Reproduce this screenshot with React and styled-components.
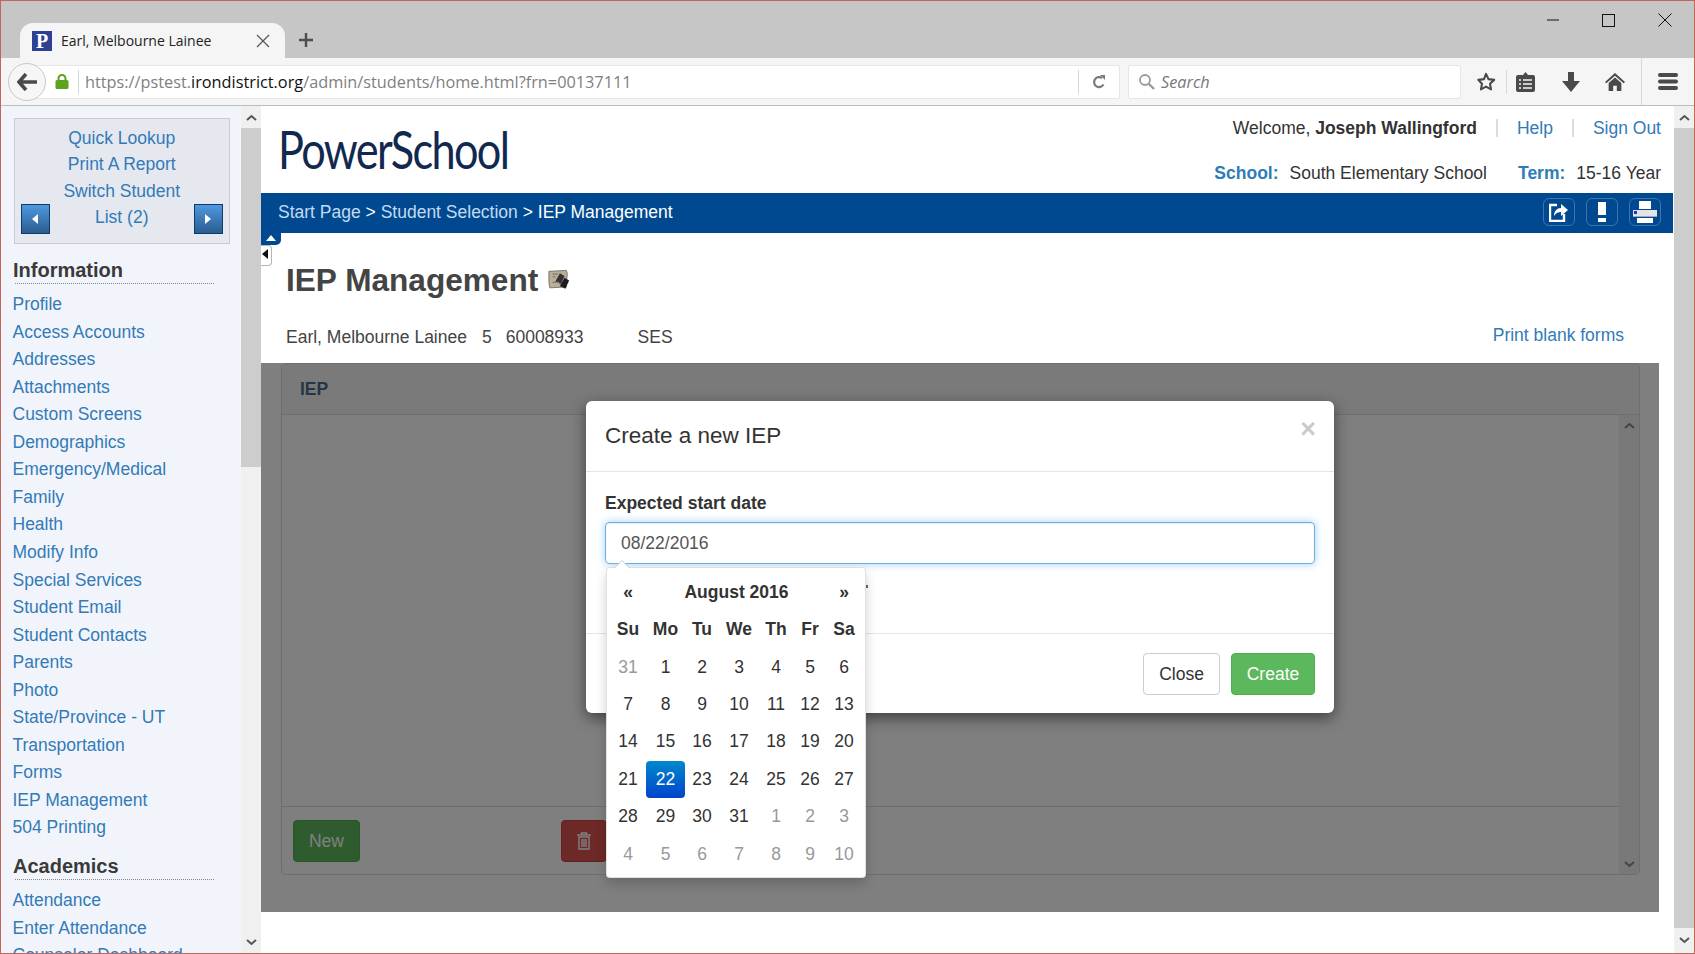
import React from 'react'
import styled, { createGlobalStyle } from 'styled-components'

const GlobalStyle = createGlobalStyle`
  html, body {
    margin: 0;
    padding: 0;
    background: #fff;
  }
  * { box-sizing: border-box; }
`;

const Window = styled.div`
  width: 1695px;
  height: 954px;
  border: 1px solid #c2675c;
  display: flex;
  flex-direction: column;
  overflow: hidden;
  font-family: "Liberation Sans", Arial, sans-serif;
  font-size: 17.5px;
  color: #333;
  background: #fff;
`;

const TitleBar = styled.div`
  height: 57px;
  flex: none;
  background: #c6c6c6;
  display: flex;
  align-items: flex-end;
  padding-left: 19px;
`;

const Tab = styled.div`
  width: 265px;
  height: 35px;
  background: #f5f5f5;
  border-radius: 13px 13px 0 0;
  display: flex;
  align-items: center;
  padding: 0 15px 0 12px;
  font-family: "Open Sans", sans-serif;
  font-size: 14px;
  color: #222;
`;

const Favicon = styled.div`
  width: 20px;
  height: 20px;
  background: #2f3f92;
  color: #fff;
  font-family: "Liberation Serif", serif;
  font-weight: bold;
  font-size: 20px;
  line-height: 20px;
  text-align: center;
  margin-right: 9px;
`;

const TabLabel = styled.span`
  flex: 1;
`;

const NewTab = styled.div`
  margin: 0 0 10px 13px;
  display: flex;
`;

const WindowControls = styled.div`
  margin-left: auto;
  align-self: flex-start;
  display: flex;
  align-items: center;
  padding: 12px 22px 0 0;
  gap: 43px;
`;

const Toolbar = styled.div`
  height: 48px;
  flex: none;
  background: #f5f5f5;
  border-bottom: 1px solid #bdbdbd;
  display: flex;
  align-items: center;
  padding-left: 7px;
`;

const BackButton = styled.div`
  width: 38px;
  height: 38px;
  flex: none;
  border-radius: 50%;
  border: 1px solid #c9c9c9;
  background: #f6f6f6;
  display: flex;
  align-items: center;
  justify-content: center;
  margin-right: -26px;
  position: relative;
  z-index: 1;
`;

const UrlBar = styled.div`
  width: 1100px;
  height: 34px;
  background: #fff;
  border: 1px solid #e6e6e6;
  border-radius: 2px;
  display: flex;
  align-items: center;
  padding-left: 34px;
  font-family: "Open Sans", sans-serif;
  font-size: 16.3px;
  color: #7f7f7f;
`;

const VRule = styled.span`
  width: 1px;
  height: 24px;
  background: #d8d8d8;
  flex: none;
  margin: ${(p) => p.$margin || '0'};
`;

const UrlText = styled.span`
  flex: 1;
  white-space: nowrap;
  b {
    font-weight: 400;
    color: #111;
  }
`;

const SearchBar = styled.div`
  width: 333px;
  height: 34px;
  flex: none;
  margin-left: 8px;
  background: #fff;
  border: 1px solid #e6e6e6;
  border-radius: 2px;
  display: flex;
  align-items: center;
  padding-left: 9px;
  gap: 5px;
  font-family: "Open Sans", sans-serif;
  font-style: italic;
  font-size: 16.3px;
  color: #777;
`;

const IconSlot = styled.div`
  width: 20px;
  height: 22px;
  flex: none;
  display: flex;
  align-items: center;
  justify-content: center;
  margin-left: ${(p) => p.$ml || 0}px;
`;

const ToolRule = styled.span`
  width: 1px;
  flex: none;
  height: ${(p) => p.$h}px;
  background: #d9d9d9;
  margin-left: ${(p) => p.$ml}px;
`;

const Body = styled.div`
  flex: 1;
  display: flex;
  min-height: 0;
`;

const Sidebar = styled.nav`
  width: 240px;
  flex: none;
  background: #f1f5fb;
  padding: 12px 0 0 11.5px;
  overflow: hidden;
`;

const QuickBox = styled.div`
  width: 216px;
  margin: 0 0 0 1.5px;
  background: #e5e9ef;
  border: 1px solid #c9cbcc;
  padding: 6px 6px 9px 5.5px;
  text-align: center;
  line-height: 26.4px;
`;

const Link = styled.a`
  color: #337ab7;
  text-decoration: none;
  display: ${(p) => (p.$block ? 'block' : 'inline')};
`;

const SwitchRow = styled.div`
  height: 30px;
  display: flex;
  align-items: center;
  justify-content: space-between;
`;

const SwitchLabel = styled.span`
  padding-bottom: 4px;
`;

const ArrowButton = styled.div`
  width: 29px;
  height: 30px;
  background: linear-gradient(#4f98e0, #2a5c8f);
  border: 1px solid #0d3b70;
  display: flex;
  align-items: center;
  justify-content: center;
`;

const SideHeading = styled.h3`
  margin: ${(p) => p.$top}px 0 7px 2px;
  width: 199px;
  font-size: 20px;
  line-height: 24px;
  padding-bottom: 1px;
  font-weight: bold;
  text-indent: -1.5px;
  color: #3a3a3a;
  border-bottom: 1px dotted #888;
`;

const SideLink = styled(Link)`
  display: block;
  line-height: 27.53px;
  white-space: nowrap;
`;

const ScrollTrack = styled.div`
  width: ${(p) => p.$w}px;
  flex: none;
  background: #f0f0f0;
  display: flex;
  flex-direction: column;
`;

const ScrollEnd = styled.div`
  height: ${(p) => p.$h}px;
  flex: none;
  display: flex;
  align-items: center;
  justify-content: center;
`;

const ScrollThumb = styled.div`
  height: ${(p) => (p.$h ? `${p.$h}px` : 'auto')};
  flex: ${(p) => (p.$h ? 'none' : '1')};
  background: #cdcdcd;
`;

const ScrollRest = styled.div`
  flex: 1;
`;

const Main = styled.main`
  flex: 1;
  min-width: 0;
  position: relative;
  display: flex;
  flex-direction: column;
`;

const Header = styled.header`
  height: 87px;
  flex: none;
  display: flex;
  justify-content: space-between;
  padding: 9px 13px 0 16.5px;
`;

const Logo = styled.div`
  font-family: Lato, sans-serif;
  font-size: 52px;
  line-height: 62px;
  margin-top: 3px;
  letter-spacing: -2px;
  color: #12294f;
  transform: scaleX(0.832);
  transform-origin: left center;
`;

const HeaderInfo = styled.div`
  display: flex;
  flex-direction: column;
  align-items: flex-end;
  gap: 19px;
  line-height: 26px;
`;

const InfoRow = styled.div`
  display: flex;
  align-items: center;
  gap: ${(p) => p.$gap}px;
  white-space: nowrap;
`;

const Pipe = styled.span`
  width: 2px;
  height: 18px;
  background: #dcdcdc;
`;

const InfoKey = styled.b`
  color: #2e7db5;
  margin-left: ${(p) => p.$ml || 0}px;
`;

const CrumbBar = styled.div`
  height: 40px;
  flex: none;
  margin-right: 1px;
  background: #004990;
  display: flex;
  align-items: center;
  justify-content: space-between;
  padding: 0 12px 2px 17px;
  color: #fff;
`;

const CrumbLink = styled.a`
  color: #c3daf0;
  text-decoration: none;
`;

const CrumbTools = styled.div`
  display: flex;
  gap: 11px;
`;

const CrumbTool = styled.div`
  width: 32px;
  height: 28px;
  border: 1px solid #3d74ac;
  border-radius: 6px;
  display: flex;
  align-items: center;
  justify-content: center;
`;

const CollapseUp = styled.div`
  position: absolute;
  left: 0;
  top: 127px;
  width: 20px;
  height: 12px;
  background: #004990;
  border-radius: 0 0 5px 0;
  display: flex;
  justify-content: center;
  padding-top: 2px;
`;

const CollapseLeft = styled.div`
  position: absolute;
  left: 0;
  top: 139px;
  width: 11px;
  height: 21px;
  background: #fff;
  border: 1px solid #b5b5b5;
  border-left: 0;
  border-radius: 0 4px 4px 0;
  display: flex;
  align-items: center;
  padding-bottom: 3px;
`;

const PageTitle = styled.h1`
  margin: 27px 0 0;
  padding-left: 25px;
  font-size: 31.6px;
  line-height: 40px;
  font-weight: bold;
  color: #444;
  display: flex;
  align-items: center;
  gap: 10px;
`;

const StudentLine = styled.div`
  margin: 24px 0 13px;
  padding: 0 50px 0 25px;
  height: 26px;
  line-height: 26px;
  display: flex;
  color: #444;
`;

const StudentField = styled.span`
  margin-right: ${(p) => p.$mr}px;
`;

const PrintLink = styled(Link)`
  margin-left: auto;
  margin-top: -2px;
`;

const Content = styled.div`
  width: 1398px;
  height: 549px;
  flex: none;
  position: relative;
  padding: 0 19px 0 20px;
`;

const Panel = styled.section`
  height: 512px;
  border: 1px solid #ddd;
  border-radius: 4px;
  display: flex;
  flex-direction: column;
`;

const PanelHead = styled.div`
  height: 51px;
  flex: none;
  background: #f5f5f5;
  border-bottom: 1px solid #ddd;
  padding-left: 18px;
  line-height: 51px;
  font-weight: bold;
  color: #4a6d88;
`;

const PanelBody = styled.div`
  flex: 1;
  display: flex;
  min-height: 0;
`;

const PanelMain = styled.div`
  flex: 1;
  display: flex;
  flex-direction: column;
`;

const PanelBlank = styled.div`
  flex: 1;
`;

const PanelFoot = styled.div`
  height: 68px;
  flex: none;
  border-top: 1px solid #ddd;
  padding: 13px 11px;
  display: flex;
  gap: 201px;
`;

const Button = styled.button`
  height: 42px;
  font: inherit;
  border-radius: 4px;
  display: flex;
  align-items: center;
  justify-content: center;
  border: 1px solid ${(p) => p.$border};
  background: ${(p) => p.$bg};
  color: ${(p) => p.$color};
  width: ${(p) => p.$w}px;
  padding: 0;
`;

const Backdrop = styled.div`
  position: absolute;
  inset: 0;
  background: rgba(0, 0, 0, 0.5);
`;

const Modal = styled.div`
  position: absolute;
  left: 325px;
  top: 38px;
  width: 748px;
  height: 312px;
  background: #fff;
  border-radius: 6px;
  box-shadow: 0 5px 15px rgba(0, 0, 0, 0.5);
  display: flex;
  flex-direction: column;
`;

const ModalHead = styled.div`
  height: 71px;
  flex: none;
  border-bottom: 1px solid #e5e5e5;
  padding: 17px 18px 0 19px;
  display: flex;
  justify-content: space-between;
`;

const ModalTitle = styled.h4`
  margin: 0;
  font-size: 22.5px;
  font-weight: normal;
  line-height: 36px;
  color: #333;
`;

const CloseX = styled.span`
  font-weight: bold;
  font-size: 27px;
  line-height: 22px;
  color: #000;
  opacity: 0.2;
`;

const ModalBody = styled.div`
  height: 161px;
  flex: none;
  padding: 18px 19px 0;
`;

const FieldLabel = styled.label`
  display: block;
  font-weight: bold;
  line-height: 26px;
  margin-bottom: 6px;
  color: #333;
`;

const DateField = styled.div`
  position: relative;
`;

const DateInput = styled.div`
  height: 42px;
  border: 1px solid #66afe9;
  border-radius: 4px;
  padding-left: 15px;
  line-height: 40px;
  color: #555;
  box-shadow: inset 0 1px 1px rgba(0, 0, 0, 0.075), 0 0 8px rgba(102, 175, 233, 0.6);
`;

const HiddenRow = styled.div`
  width: 263px;
  height: 6px;
  margin-top: 21px;
  border-right: 2px solid #666;
  clip-path: inset(0 0 3px 0);
`;

const Picker = styled.div`
  position: absolute;
  left: 1px;
  top: 45px;
  width: 260px;
  height: 311px;
  background: #fff;
  border-radius: 4px;
  border: 1px solid rgba(0, 0, 0, 0.12);
  box-shadow: 0 6px 12px rgba(0, 0, 0, 0.175);
  padding: 5px 0 0 3px;
  z-index: 2;
  &::before {
    content: '';
    position: absolute;
    top: -8px;
    left: 7px;
    border-left: 8px solid transparent;
    border-right: 8px solid transparent;
    border-bottom: 8px solid #ccc;
  }
  &::after {
    content: '';
    position: absolute;
    top: -7px;
    left: 8px;
    border-left: 7px solid transparent;
    border-right: 7px solid transparent;
    border-bottom: 7px solid #fff;
  }
`;

const PickerGrid = styled.div`
  display: grid;
  grid-template-columns: 36px 39px 34px 40px 34px 34px 34px;
  grid-template-rows: 38px repeat(7, 37.4px);
  color: #333;
`;

const Cell = styled.div`
  display: flex;
  align-items: center;
  justify-content: center;
  border-radius: 4px;
  font-weight: ${(p) => (p.$bold ? 'bold' : 'normal')};
  color: ${(p) => (p.$muted ? '#999' : p.$active ? '#fff' : 'inherit')};
  background: ${(p) => (p.$active ? 'linear-gradient(#0088cc, #0044cc)' : 'none')};
`;

const MonthCell = styled(Cell)`
  grid-column: span 5;
`;

const ModalFoot = styled.div`
  flex: 1;
  border-top: 1px solid #e5e5e5;
  padding: 19px 19px 0 0;
  display: flex;
  justify-content: flex-end;
  gap: 11px;
`;

const sideGroups = [
  ['Information', 14, ['Profile', 'Access Accounts', 'Addresses', 'Attachments', 'Custom Screens', 'Demographics', 'Emergency/Medical', 'Family', 'Health', 'Modify Info', 'Special Services', 'Student Email', 'Student Contacts', 'Parents', 'Photo', 'State/Province - UT', 'Transportation', 'Forms', 'IEP Management', '504 Printing']],
  ['Academics', 12.5, ['Attendance', 'Enter Attendance', 'Counselor Dashboard']],
]

const weekDays = ['Su', 'Mo', 'Tu', 'We', 'Th', 'Fr', 'Sa']

const calendar = [
  [31, 1, 2, 3, 4, 5, 6],
  [7, 8, 9, 10, 11, 12, 13],
  [14, 15, 16, 17, 18, 19, 20],
  [21, 22, 23, 24, 25, 26, 27],
  [28, 29, 30, 31, 1, 2, 3],
  [4, 5, 6, 7, 8, 9, 10],
]

const isMuted = (row, day) => (row === 0 && day > 20) || (row >= 4 && day < 20)

const Chevron = ({ down, color = '#555' }) => (
  <svg width="11" height="7" viewBox="0 0 11 7">
    <path d={down ? 'M1 1l4.5 4L10 1' : 'M1 6l4.5-4L10 6'} fill="none" stroke={color} strokeWidth="2" />
  </svg>
)

const Triangle = ({ dir, color = '#fff' }) => (
  <svg width="8" height="10" viewBox="0 0 8 10">
    <path d={dir === 'left' ? 'M7 0v10L1 5z' : 'M1 0v10l6-5z'} fill={color} />
  </svg>
)

const BellsIcon = () => (
  <svg width="22" height="23" viewBox="0 0 24 24">
    <path d="M1 2l19-1 1 3-1 15-18 1-1-6z" fill="#b9ae98" stroke="#77705f" strokeWidth="1" />
    <path d="M5 5h6M5 8h3M5 14h4" stroke="#6f675a" strokeWidth="1" />
    <path d="M8 13l5-9 5 3-4 9z" fill="#333" />
    <path d="M13 18l5-9 5 3-4 9z" fill="#1c1c1c" />
    <path d="M10 13l4 3" stroke="#888" strokeWidth="1" />
  </svg>
)

const App = () => (
  <Window>
    <GlobalStyle />
    <TitleBar>
      <Tab>
        <Favicon>P</Favicon>
        <TabLabel>Earl, Melbourne Lainee</TabLabel>
        <svg width="14" height="14" viewBox="0 0 14 14">
          <path d="M1 1l12 12M13 1L1 13" stroke="#555" strokeWidth="1.2" />
        </svg>
      </Tab>
      <NewTab>
        <svg width="16" height="16" viewBox="0 0 16 16">
          <path d="M8 1v14M1 8h14" stroke="#4d4d4d" strokeWidth="2.4" />
        </svg>
      </NewTab>
      <WindowControls>
        <svg width="12" height="12" viewBox="0 0 12 12">
          <path d="M0 6h12" stroke="#111" strokeWidth="1" />
        </svg>
        <svg width="13" height="13" viewBox="0 0 13 13">
          <rect x="0.5" y="0.5" width="12" height="12" fill="none" stroke="#111" />
        </svg>
        <svg width="14" height="14" viewBox="0 0 14 14">
          <path d="M0.5 0.5l13 13M13.5 0.5l-13 13" stroke="#111" strokeWidth="1" />
        </svg>
      </WindowControls>
    </TitleBar>

    <Toolbar>
      <BackButton>
        <svg width="20" height="18" viewBox="0 0 20 18">
          <path d="M9 1L2 9l7 8M2 9h18" fill="none" stroke="#4a4a4a" strokeWidth="3.6" />
        </svg>
      </BackButton>
      <UrlBar>
        <svg width="14" height="15" viewBox="0 0 14 15">
          <path d="M3.5 7V4.5a3.5 3.5 0 0 1 7 0V7" fill="none" stroke="#5ba21e" strokeWidth="2" />
          <rect x="0.5" y="6" width="13" height="9" rx="1.5" fill="#5ba21e" />
        </svg>
        <VRule $margin="0 6px 0 9px" />
        <UrlText>https://pstest.<b>irondistrict.org</b>/admin/students/home.html?frn=00137111</UrlText>
        <VRule $margin="0 13px 0 0" />
        <svg width="14" height="14" viewBox="0 0 14 14" style={{ marginRight: 13 }}>
          <path d="M11.5 9.5A5 5 0 1 1 10 3" fill="none" stroke="#7a7a7a" strokeWidth="2.2" />
          <path d="M8 0l5 0v5z" fill="#7a7a7a" />
        </svg>
      </UrlBar>
      <SearchBar>
        <svg width="18" height="18" viewBox="0 0 18 18">
          <circle cx="7" cy="7" r="5" fill="none" stroke="#9b9b9b" strokeWidth="1.8" />
          <path d="M10.5 10.5L16 16" stroke="#9b9b9b" strokeWidth="2.4" />
        </svg>
        Search
      </SearchBar>
      <IconSlot $ml={15}>
        <svg width="22" height="21" viewBox="0 0 21 20">
          <path d="M10.5 2l2.6 5.5 6 .8-4.4 4.1 1.1 5.9-5.3-2.9-5.3 2.9 1.1-5.9L2.4 8.3l6-.8z" fill="none" stroke="#4a4a4a" strokeWidth="2.2" strokeLinejoin="round" />
        </svg>
      </IconSlot>
      <ToolRule $h={24} $ml={10} />
      <IconSlot $ml={8}>
        <svg width="19" height="21" viewBox="0 0 19 21">
          <path d="M2 4h5l2.5-3L12 4h5a2 2 0 0 1 2 2v13a2 2 0 0 1-2 2H2a2 2 0 0 1-2-2V6a2 2 0 0 1 2-2z" fill="#4a4a4a" />
          <path d="M3 9h2M3 13h2M3 17h2M7 9h9M7 13h9M7 17h9" stroke="#f5f5f5" strokeWidth="1.6" />
        </svg>
      </IconSlot>
      <IconSlot $ml={26}>
        <svg width="20" height="20" viewBox="0 0 20 20">
          <path d="M7 0h6v9h6l-9 11L1 9h6z" fill="#4a4a4a" />
        </svg>
      </IconSlot>
      <IconSlot $ml={24}>
        <svg width="22" height="20" viewBox="0 0 22 20">
          <path d="M11 0l11 10-1.5 1.5L11 3 1.5 11.5 0 10z" fill="#4a4a4a" />
          <path d="M4 11l7-6 7 6v9h-5v-6H9v6H4z" fill="#4a4a4a" />
        </svg>
      </IconSlot>
      <ToolRule $h={47} $ml={16} />
      <IconSlot $ml={16}>
        <svg width="20" height="17" viewBox="0 0 20 17">
          <rect width="20" height="4" y="0" rx="2" fill="#4a4a4a" />
          <rect width="20" height="4" y="6.5" rx="2" fill="#4a4a4a" />
          <rect width="20" height="4" y="13" rx="2" fill="#4a4a4a" />
        </svg>
      </IconSlot>
    </Toolbar>

    <Body>
      <Sidebar>
        <QuickBox>
          <Link $block href="#">Quick Lookup</Link>
          <Link $block href="#">Print A Report</Link>
          <Link $block href="#">Switch Student</Link>
          <SwitchRow>
            <ArrowButton><Triangle dir="left" /></ArrowButton>
            <SwitchLabel><Link href="#">List (2)</Link></SwitchLabel>
            <ArrowButton><Triangle dir="right" /></ArrowButton>
          </SwitchRow>
        </QuickBox>
        {sideGroups.map(([title, top, links]) => (
          <div key={title}>
            <SideHeading $top={top}>{title}</SideHeading>
            {links.map((name) => <SideLink key={name} href="#">{name}</SideLink>)}
          </div>
        ))}
      </Sidebar>
      <ScrollTrack $w={20}>
        <ScrollEnd $h={22}><Chevron /></ScrollEnd>
        <ScrollThumb $h={339} />
        <ScrollRest />
        <ScrollEnd $h={22}><Chevron down /></ScrollEnd>
      </ScrollTrack>

      <Main>
        <Header>
          <Logo>PowerSchool</Logo>
          <HeaderInfo>
            <InfoRow $gap={19}>
              <span>Welcome, <b>Joseph Wallingford</b></span>
              <Pipe />
              <Link href="#">Help</Link>
              <Pipe />
              <Link href="#">Sign Out</Link>
            </InfoRow>
            <InfoRow $gap={11}>
              <InfoKey>School:</InfoKey>
              <span>South Elementary School</span>
              <InfoKey $ml={20}>Term:</InfoKey>
              <span>15-16 Year</span>
            </InfoRow>
          </HeaderInfo>
        </Header>

        <CrumbBar>
          <div>
            <CrumbLink href="#">Start Page</CrumbLink> &gt; <CrumbLink href="#">Student Selection</CrumbLink> &gt; IEP Management
          </div>
          <CrumbTools>
            <CrumbTool>
              <svg width="20" height="20" viewBox="0 0 20 20">
                <path d="M8 3H1v16h14v-7" fill="none" stroke="#fff" strokeWidth="2.4" />
                <path d="M5 14c0-5 3-8 7-8V2l7 6-7 6v-4c-3 0-5 1-7 4z" fill="#fff" />
              </svg>
            </CrumbTool>
            <CrumbTool>
              <svg width="8" height="20" viewBox="0 0 8 20">
                <path d="M0 0h8v13H0zM0 16h8v4H0z" fill="#fff" />
              </svg>
            </CrumbTool>
            <CrumbTool>
              <svg width="24" height="22" viewBox="0 0 24 22">
                <path d="M6 0h12v8H6z" fill="#fff" />
                <path d="M0 9h24v6H0z" fill="#e4e4e4" />
                <path d="M1 10h3v3H1z" fill="#1d2fd6" />
                <path d="M4 17h16v5H4z" fill="#fff" />
                <path d="M0 15h24v1H0z" fill="#9ab" />
              </svg>
            </CrumbTool>
          </CrumbTools>
        </CrumbBar>
        <CollapseUp>
          <svg width="10" height="6" viewBox="0 0 10 6"><path d="M5 0l5 6H0z" fill="#fff" /></svg>
        </CollapseUp>
        <CollapseLeft><Triangle dir="left" color="#111" /></CollapseLeft>

        <PageTitle>IEP Management <BellsIcon /></PageTitle>
        <StudentLine>
          <StudentField $mr={15}>Earl, Melbourne Lainee</StudentField>
          <StudentField $mr={14}>5</StudentField>
          <StudentField $mr={54}>60008933</StudentField>
          <StudentField $mr={0}>SES</StudentField>
          <PrintLink href="#">Print blank forms</PrintLink>
        </StudentLine>

        <Content>
          <Panel>
            <PanelHead>IEP</PanelHead>
            <PanelBody>
              <PanelMain>
                <PanelBlank />
                <PanelFoot>
                  <Button $w={67} $bg="#5cb85c" $border="#4cae4c" $color="#fff">New</Button>
                  <Button $w={46} $bg="#d9534f" $border="#d43f3a" $color="#fff">
                    <svg width="14" height="18" viewBox="0 0 14 18">
                      <path d="M0 3h14M4.5 3V1h5v2M2 5h10v12H2zM5 7v8M7 7v8M9 7v8" fill="none" stroke="#fff" strokeWidth="1.4" />
                    </svg>
                  </Button>
                </PanelFoot>
              </PanelMain>
              <ScrollTrack $w={20}>
                <ScrollEnd $h={20}><Chevron color="#888" /></ScrollEnd>
                <ScrollRest />
                <ScrollEnd $h={20}><Chevron down color="#888" /></ScrollEnd>
              </ScrollTrack>
            </PanelBody>
          </Panel>
          <Backdrop />
          <Modal>
            <ModalHead>
              <ModalTitle>Create a new IEP</ModalTitle>
              <CloseX>×</CloseX>
            </ModalHead>
            <ModalBody>
              <FieldLabel>Expected start date</FieldLabel>
              <DateField>
                <DateInput>08/22/2016</DateInput>
                <Picker>
                  <PickerGrid>
                    <Cell $bold>«</Cell>
                    <MonthCell $bold>August 2016</MonthCell>
                    <Cell $bold>»</Cell>
                    {weekDays.map((d) => <Cell key={d} $bold>{d}</Cell>)}
                    {calendar.map((week, row) => week.map((day, col) => (
                      <Cell
                        key={`${row}-${col}`}
                        $muted={isMuted(row, day)}
                        $active={row === 3 && day === 22}
                      >
                        {day}
                      </Cell>
                    )))}
                  </PickerGrid>
                </Picker>
              </DateField>
              <HiddenRow />
            </ModalBody>
            <ModalFoot>
              <Button $w={77} $bg="#fff" $border="#ccc" $color="#333">Close</Button>
              <Button $w={84} $bg="#5cb85c" $border="#4cae4c" $color="#fff">Create</Button>
            </ModalFoot>
          </Modal>
        </Content>
      </Main>

      <ScrollTrack $w={20}>
        <ScrollEnd $h={22}><Chevron /></ScrollEnd>
        <ScrollThumb />
        <ScrollEnd $h={25}><Chevron down /></ScrollEnd>
      </ScrollTrack>
    </Body>
  </Window>
)

export default App
